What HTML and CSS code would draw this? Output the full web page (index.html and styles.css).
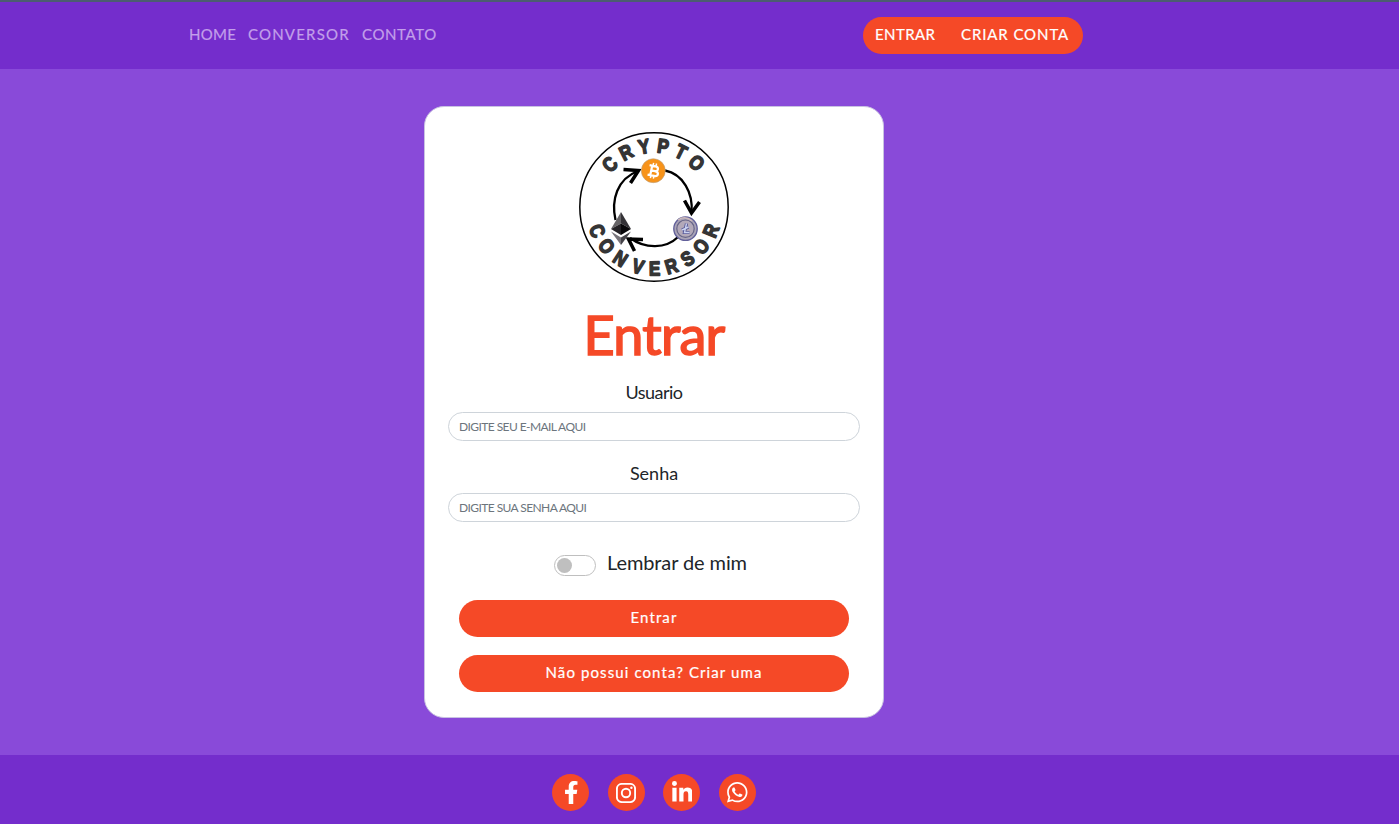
FILE: index.html
```html
<!DOCTYPE html>
<html lang="pt-BR">
<head>
<meta charset="utf-8">
<title>Crypto Conversor - Entrar</title>
<link rel="stylesheet" href="styles.css">
</head>
<body>
<header class="navbar">
  <nav class="links">
    <a class="l-home">HOME</a><a class="l-conv">CONVERSOR</a><a class="l-cont">CONTATO</a>
  </nav>
  <div class="account"><a class="a-in">ENTRAR</a><a class="a-new">CRIAR CONTA</a></div>
</header>
<main class="main">
  <form class="card">
    <svg class="logo" viewBox="0 0 150 150">
      <circle cx="75" cy="75" r="74.2" fill="#fff" stroke="#000" stroke-width="1.5"/>
      <g class="ring">
        <text transform="rotate(-46 75 75) translate(75 20.5) scale(.85 1)">C</text>
        <text transform="rotate(-27 75 75) translate(75 20.5) scale(.85 1)">R</text>
        <text transform="rotate(-9.5 75 75) translate(75 20.5) scale(.85 1)">Y</text>
        <text transform="rotate(8.5 75 75) translate(75 20.5) scale(.85 1)">P</text>
        <text transform="rotate(26 75 75) translate(75 20.5) scale(.85 1)">T</text>
        <text transform="rotate(44 75 75) translate(75 20.5) scale(.85 1)">O</text>
        <text transform="rotate(67 75 75) translate(75 143.500) scale(.85 1)">C</text>
        <text transform="rotate(50.5 75 75) translate(75 143.500) scale(.85 1)">O</text>
        <text transform="rotate(33 75 75) translate(75 143.500) scale(.85 1)">N</text>
        <text transform="rotate(15 75 75) translate(75 143.500) scale(.85 1)">V</text>
        <text transform="rotate(-.5 75 75) translate(75 143.500) scale(.85 1)">E</text>
        <text transform="rotate(-16.5 75 75) translate(75 143.500) scale(.85 1)">R</text>
        <text transform="rotate(-33 75 75) translate(75 143.500) scale(.85 1)">S</text>
        <text transform="rotate(-50 75 75) translate(75 143.500) scale(.85 1)">O</text>
        <text transform="rotate(-67.5 75 75) translate(75 143.500) scale(.85 1)">R</text>
      </g>
      <g fill="none" stroke="#000" stroke-width="2.3">
        <path d="M86 38.500C104 42 114.500 61 112.500 81"/>
        <path d="M99 105C87 117 66 117 51 106"/>
        <path d="M36.500 88C32 68 38 47 59 39"/>
        <path d="M105.500 68.500L112.500 81L120.500 70" stroke-width="3.500"/>
        <path d="M64 107.500L49.500 107L55.500 119" stroke-width="3.500"/>
        <path d="M44.500 37.500L59.500 38.500L51.500 51" stroke-width="3.500"/>
      </g>
      <circle cx="74.300" cy="38.700" r="12" fill="#f7931a" stroke="#b8a080" stroke-width=".6"/>
      <g fill="none" stroke="#fff" stroke-width="2.200" transform="rotate(12 74.300 38.700)">
        <path d="M69.500 34H75.500Q78.500 34 78.500 36.400T75.500 38.700H72H76Q79.500 38.700 79.500 41.200T76 43.700H69.500M72.200 34V43.700"/>
        <path d="M73 31V34M76 31V34M73 43.500V46.500M76 43.500V46.500" stroke-width="1.500"/>
      </g>
      <circle cx="106.500" cy="96.700" r="11.700" fill="#aaa4b7" stroke="#62609a" stroke-width="1.400"/>
      <circle cx="106.500" cy="96.700" r="8.700" fill="#b3a9b9" stroke="#666487" stroke-width="1.200"/>
      <path d="M99 88Q106 83 113 89" fill="none" stroke="#cbb9bb" stroke-width="1.500"/>
      <path d="M107.500 91.500L105.500 100.500H110.500M103 98L109.500 95" fill="none" stroke="#5a5a98" stroke-width="3.200"/>
      <path d="M107.500 91.500L105.500 100.500H110.500M103 98L109.500 95" fill="none" stroke="#c9d1ef" stroke-width="1.400"/>
      <path d="M42 80L32 97L42 91.500Z" fill="#666467"/><path d="M42 80L52 97L42 91.500Z" fill="#343237"/>
      <path d="M32 97L42 91.500V103Z" fill="#242226"/><path d="M52 97L42 91.500V103Z" fill="#08070a"/>
      <path d="M32 99.500L42 105.500V113Z" fill="#77747a"/><path d="M52 99.500L42 105.500V113Z" fill="#454349"/>
    </svg>
    <h1 class="title">Entrar</h1>
    <label class="label l-user">Usuario</label>
    <input class="field f-mail" placeholder="DIGITE SEU E-MAIL AQUI">
    <label class="label l-pass">Senha</label>
    <input class="field f-pass" placeholder="DIGITE SUA SENHA AQUI">
    <div class="remember"><span class="switch"></span><span class="rem-text">Lembrar de mim</span></div>
    <button type="button" class="btn b-in">Entrar</button>
    <button type="button" class="btn b-new">Não possui conta? Criar uma</button>
  </form>
</main>
<footer class="footer">
  <a class="social"><svg class="fb" viewBox="0 0 320 512" width="14.500" height="23.200"><path d="M279.140 288l14.220-92.660h-88.910v-60.130c0-25.350 12.420-50.060 52.240-50.060h40.420V6.260S260.430 0 225.360 0c-73.220 0-121.080 44.380-121.080 124.720v70.620H22.890V288h81.390v224h100.170V288z"/></svg></a>
  <a class="social"><svg viewBox="0 0 20 20" width="20" height="20"><g fill="none" stroke="#fff" stroke-width="1.900"><rect x=".9" y=".9" width="18.200" height="18.200" rx="5"/><circle cx="10" cy="10" r="4.200"/></g><circle cx="15.400" cy="4.700" r="1.200"/></svg></a>
  <a class="social"><svg class="in" viewBox="0 0 448 448" width="20.500" height="20.500"><path d="M100.280 448H7.400V148.900h92.880zM53.790 108.100C24.090 108.100 0 83.500 0 53.800a53.790 53.790 0 0 1 107.580 0c0 29.700-24.100 54.300-53.790 54.300zM447.900 448h-92.680V302.400c0-34.700-.7-79.200-48.290-79.200-48.290 0-55.690 37.700-55.690 76.700V448h-92.780V148.900h89.080v40.800h1.300c12.400-23.500 42.690-48.300 87.880-48.300 94 0 111.280 61.900 111.280 142.300V448z"/></svg></a>
  <a class="social"><svg viewBox="0 32 448 448" width="20.500" height="20.500"><path d="M380.900 97.100C339 55.100 283.200 32 223.900 32c-122.400 0-222 99.600-222 222 0 39.100 10.200 77.300 29.600 111L0 480l117.700-30.900c32.400 17.700 68.900 27 106.100 27h.1c122.300 0 224.100-99.600 224.100-222 0-59.300-25.200-115-67.100-157zm-157 341.600c-33.200 0-65.700-8.900-94-25.700l-6.700-4-69.800 18.300L72 359.200l-4.400-7c-18.500-29.400-28.200-63.300-28.200-98.200 0-101.700 82.800-184.500 184.600-184.500 49.300 0 95.600 19.200 130.400 54.100 34.800 34.900 56.200 81.200 56.100 130.500 0 101.800-84.900 184.600-186.600 184.600zm101.200-138.200c-5.500-2.800-32.800-16.200-37.900-18-5.100-1.900-8.800-2.800-12.500 2.800-3.700 5.600-14.300 18-17.600 21.800-3.200 3.700-6.500 4.200-12 1.400-32.600-16.300-54-29.100-75.500-66-5.700-9.800 5.700-9.100 16.300-30.300 1.800-3.700.9-6.900-.5-9.700-1.400-2.800-12.500-30.100-17.100-41.200-4.500-10.800-9.100-9.300-12.500-9.500-3.200-.2-6.900-.2-10.600-.2-3.700 0-9.700 1.400-14.800 6.900-5.100 5.600-19.400 19-19.400 46.300 0 27.300 19.900 53.700 22.600 57.400 2.800 3.700 39.100 59.700 94.800 83.800 35.200 15.200 49 16.500 66.600 13.900 10.700-1.600 32.800-13.400 37.400-26.400 4.600-13 4.600-24.100 3.200-26.400-1.300-2.500-5-3.900-10.500-6.600z"/></svg></a>
</footer>
</body>
</html>
```
FILE: styles.css
```css
* { box-sizing: border-box; }
body { margin: 0; height: 824px; overflow: hidden; display: flex; flex-direction: column; background: #894ad9; font-family: Lato, "Liberation Sans", sans-serif; color: #212529; }
.navbar { height: 69px; flex: none; display: flex; justify-content: space-between; align-items: flex-start; padding: 15px 316px 0 189px; background: #742dcc; border-top: 2px solid #4c5c70; }
.links { display: flex; gap: 12px; height: 37px; align-items: center; padding-bottom: 3px; color: #c29fea; font-size: 15px; line-height: 20px; letter-spacing: 1px; white-space: nowrap; -webkit-text-stroke: .2px; }
.l-home { width: 47px; letter-spacing: .3px; }
.l-conv { width: 102px; letter-spacing: 1.2px; }
.l-cont { width: 75px; letter-spacing: .6px; }
.account { display: flex; align-items: center; width: 220px; height: 37px; padding: 0 0 3px 12px; border-radius: 19px; background: #f54927; color: #fff; font-size: 15px; line-height: 20px; letter-spacing: .9px; white-space: nowrap; -webkit-text-stroke: .2px; }
.a-in { width: 86px; letter-spacing: .4px; }
.main { height: 686px; flex: none; padding: 37px 0 0 424px; }
.card { width: 460px; height: 612px; background: #fff; border: 1px solid #c9c2e2; border-radius: 20px; display: flex; flex-direction: column; align-items: center; padding-top: 25px; }
.logo { width: 150px; height: 150px; flex: none; }
.ring { font: bold 20px "Liberation Sans", sans-serif; fill: #353535; stroke: #353535; stroke-width: 1.6; stroke-linejoin: round; text-anchor: middle; }
.title { margin: 19px 0 2px; height: 67px; line-height: 67px; font-size: 54px; font-weight: 400; color: #f54927; letter-spacing: -.7px; white-space: nowrap; -webkit-text-stroke: 1.6px #f54927; }
.label { font-size: 18px; line-height: 24px; height: 26px; }
.l-user { margin-top: 10px; letter-spacing: -.5px; }
.l-pass { margin-top: 20px; }
.field { width: 412px; height: 29px; flex: none; margin-top: 6px; border: 1px solid #ced4da; border-radius: 15px; padding: 0 10px; font: 12px Lato, sans-serif; letter-spacing: -.58px; }
.field::placeholder { color: #6c757d; opacity: 1; }
.remember { margin-top: 27px; height: 30px; display: flex; gap: 11px; width: 200px; }
.switch { flex: none; width: 42px; height: 21px; margin-top: 6px; border: 1px solid #bfbfbf; border-radius: 11px; padding: 2px; }
.switch::before { content: ""; display: block; width: 15px; height: 15px; border-radius: 50%; background: #bfbfbf; }
.rem-text { font-size: 20px; line-height: 27px; letter-spacing: -.1px; white-space: nowrap; }
.btn { width: 390px; height: 37px; flex: none; border: 0; border-radius: 19px; background: #f54927; color: #fff; font: 15px Lato, sans-serif; letter-spacing: 1.1px; padding: 0 0 3px; -webkit-text-stroke: .2px; }
.b-in { margin-top: 21px; }
.b-new { margin-top: 18px; }
.footer { height: 69px; flex: none; display: flex; gap: 18.300px; padding: 19px 0 0 552px; background: #742dcc; }
.social { width: 37.300px; height: 37.300px; border-radius: 50%; background: #f54927; display: flex; align-items: center; justify-content: center; }
.social svg { fill: #fff; }
.fb { margin-left: 1.500px; }
.in { margin-bottom: 2px; }
```
